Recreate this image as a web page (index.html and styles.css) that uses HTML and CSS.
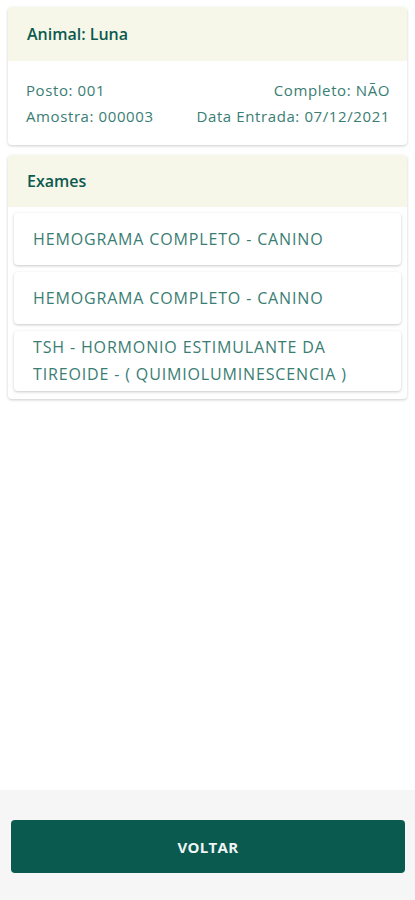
FILE: index.html
```html
<!DOCTYPE html>
<html lang="pt">
<head>
  <meta charset="UTF-8">
  <title>Animal</title>
  <meta name="viewport" content="width=device-width, initial-scale=1.0">
  <link rel="stylesheet" href="styles.css">
</head>
<body>

  <main class="conteudo">
    <section class="card">
      <div class="card-header">Animal: Luna</div>
      <div class="card-body">
        <div class="linha">
          <span>Posto: 001</span>
          <span>Completo: NÃO</span>
        </div>
        <div class="linha">
          <span>Amostra: 000003</span>
          <span>Data Entrada: 07/12/2021</span>
        </div>
      </div>
    </section>

    <section class="card">
      <div class="card-header exames-header">Exames</div>
      <ul class="exames">
        <li class="exame">HEMOGRAMA COMPLETO - CANINO</li>
        <li class="exame">HEMOGRAMA COMPLETO - CANINO</li>
        <li class="exame">TSH - HORMONIO ESTIMULANTE DA TIREOIDE - ( QUIMIOLUMINESCENCIA )</li>
      </ul>
    </section>
  </main>

  <footer class="rodape">
    <button class="voltar">VOLTAR</button>
  </footer>

</body>
</html>
```

FILE: styles.css
```css
:root {
  --primary: #0b5a50;
  --text: #3a7d73;
  --header: #f7f7e9;
  --footer: #f6f6f6;
}

* {
  box-sizing: border-box;
}

body {
  margin: 0;
  height: 100vh;
  display: flex;
  flex-direction: column;
  font-family: 'Open Sans', sans-serif;
  background: #ffffff;
  color: var(--text);
}

.conteudo {
  flex: 1;
  padding: 7px 8px;
  display: flex;
  flex-direction: column;
  gap: 10px;
}

.card {
  background: #ffffff;
  border-radius: 4px;
  box-shadow: 0 1px 3px rgba(0,0,0,0.2);
  overflow: hidden;
}

.card-header {
  background: var(--header);
  color: var(--primary);
  font-weight: 600;
  font-size: 16px;
  height: 54px;
  display: flex;
  align-items: center;
  padding: 0 19px;
}

.exames-header {
  height: 52px;
}

.card-body {
  padding: 16px 17px 16px 18px;
  font-size: 15px;
  letter-spacing: 0.6px;
}

.linha {
  display: flex;
  justify-content: space-between;
  line-height: 26px;
}

.exames {
  list-style: none;
  margin: 0;
  padding: 6px 6px 8px;
  display: flex;
  flex-direction: column;
  gap: 7px;
}

.exame {
  min-height: 52px;
  display: flex;
  align-items: center;
  padding: 3px 19px;
  font-size: 16px;
  letter-spacing: 0.85px;
  line-height: 27px;
  background: #ffffff;
  border-radius: 4px;
  box-shadow: 0 1px 3px rgba(0,0,0,0.22);
}

.rodape {
  height: 110px;
  background: var(--footer);
  padding: 30px 10px 27px 11px;
}

.voltar {
  width: 100%;
  height: 53px;
  border: none;
  border-radius: 4px;
  background: var(--primary);
  color: #eef5f4;
  font-family: 'Open Sans', sans-serif;
  font-weight: 700;
  font-size: 15px;
  letter-spacing: 0.3px;
  cursor: pointer;
}
```
